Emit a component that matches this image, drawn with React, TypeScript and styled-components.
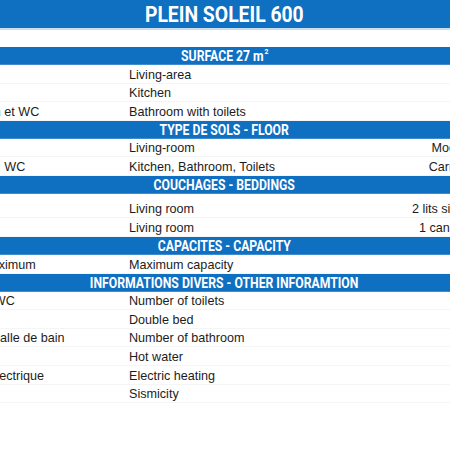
import { styled, createGlobalStyle } from 'styled-components';

const GlobalStyle = createGlobalStyle`
  html, body {
    margin: 0;
    padding: 0;
    overflow: hidden;
    background: #ffffff;
  }
`;

type Row = [string, string, string?];

interface Section {
  title: React.ReactNode;
  rows: Row[];
  tall?: boolean;
}

const sections: Section[] = [
  {
    title: (
      <>
        SURFACE 27 m<sup>2</sup>
      </>
    ),
    rows: [
      ['Pièce de vie', 'Living-area'],
      ['Cuisine', 'Kitchen'],
      ['Salle de bain et WC', 'Bathroom with toilets'],
    ],
  },
  {
    title: 'TYPE DE SOLS - FLOOR',
    rows: [
      ['Pièce de vie', 'Living-room', 'Moquette'],
      ['Cuisine, sdb, WC', 'Kitchen, Bathroom, Toilets', 'Carrelage'],
    ],
  },
  {
    title: 'COUCHAGES - BEDDINGS',
    tall: true,
    rows: [
      ['Pièce de vie', 'Living room', '2 lits simples'],
      ['Pièce de vie', 'Living room', '1 canapé-lit'],
    ],
  },
  {
    title: 'CAPACITES - CAPACITY',
    rows: [['Capacité maximum', 'Maximum capacity']],
  },
  {
    title: 'INFORMATIONS DIVERS - OTHER INFORAMTION',
    rows: [
      ['Nombre de WC', 'Number of toilets'],
      ['Lit double', 'Double bed'],
      ['Nombre de salle de bain', 'Number of bathroom'],
      ['Eau chaude', 'Hot water'],
      ['Chauffage électrique', 'Electric heating'],
      ['Sismicité', 'Sismicity'],
    ],
  },
];

const App = () => {
  return (
    <>
      <GlobalStyle />
      <StSheet>
        <StTitle>
          <StNarrow>PLEIN SOLEIL 600</StNarrow>
        </StTitle>
        <StBlank />
        {sections.map((section, i) => (
          <div key={i}>
            <StBand>
              <StNarrow>{section.title}</StNarrow>
            </StBand>
            {section.rows.map((row, j) => (
              <StRow key={j} $height={section.tall ? (j === 0 ? 24 : 19) : 18.6}>
                <StCell>{row[0]}</StCell>
                <StCell>{row[1]}</StCell>
                <StValue>{row[2] ?? ''}</StValue>
              </StRow>
            ))}
          </div>
        ))}
      </StSheet>
    </>
  );
};

export default App;

const StSheet = styled.div`
  width: 599px;
  margin-left: -75px;
  font-family: 'Liberation Sans', Arial, sans-serif;
  color: #1c1c1c;
`;

const StNarrow = styled.span`
  display: inline-block;
  transform: scaleX(0.86);
  white-space: nowrap;

  & > sup {
    font-size: 8px;
    line-height: 0;
    margin-left: 1px;
    position: relative;
    top: -1px;
  }
`;

const StTitle = styled.div`
  display: flex;
  justify-content: center;
  align-items: center;

  height: 28px;

  background-color: #0f6fc0;
  border-bottom: 2px solid #c9def1;
  color: #ffffff;
  font-family: Roboto, 'Liberation Sans', sans-serif;
  font-size: 22.5px;
  font-weight: 700;
`;

const StBlank = styled.div`
  height: 17px;
`;

const StBand = styled.div`
  display: flex;
  justify-content: center;
  align-items: center;

  height: 18px;
  padding-top: 1px;

  background-color: #0f6fc0;
  border-bottom: 1px solid #3f8dd0;
  box-sizing: border-box;
  color: #ffffff;
  font-family: Roboto, 'Liberation Sans', sans-serif;
  font-size: 14.2px;
  font-weight: 700;
`;

const StRow = styled.div<{ $height: number }>`
  display: grid;
  grid-template-columns: 201px 200px 1fr;
  align-items: end;

  height: ${({ $height }) => $height}px;

  border-bottom: 1px solid #f4f5f7;
  box-sizing: border-box;
  font-size: 12.6px;
  line-height: 16px;
`;

const StCell = styled.div`
  padding: 0 3px 0;
  white-space: nowrap;
  overflow: hidden;
`;

const StValue = styled(StCell)`
  padding-right: 40px;
  text-align: right;
`;
